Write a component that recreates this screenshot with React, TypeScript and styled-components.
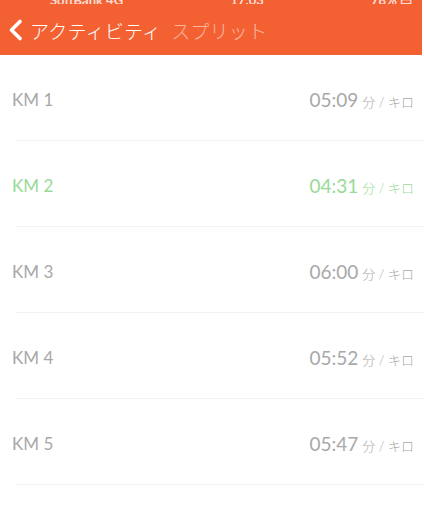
import styled, { createGlobalStyle } from "styled-components";

const GlobalStyle = createGlobalStyle`
  html, body {
    margin: 0;
    padding: 0;
    background: #ffffff;
  }
  body {
    font-family: Lato, "Noto Sans CJK JP", sans-serif;
  }
`;

type Split = { km: number; pace: string; best?: boolean };

const splits: Split[] = [
  { km: 1, pace: "05:09" },
  { km: 2, pace: "04:31", best: true },
  { km: 3, pace: "06:00" },
  { km: 4, pace: "05:52" },
  { km: 5, pace: "05:47" },
];

const App = () => {
  return (
    <Page>
      <GlobalStyle />
      <Header>
        <StatusBar>
          <StatusText>SoftBank 4G</StatusText>
          <StatusText>17:03</StatusText>
          <StatusText>78% ▭</StatusText>
        </StatusBar>
        <NavBar>
          <BackIcon width="15" height="22" viewBox="0 0 15 22">
            <path
              d="M12 2.5 L3.5 11 L12 19.5"
              fill="none"
              stroke="#ffffff"
              strokeWidth="3.6"
              strokeLinecap="round"
              strokeLinejoin="round"
            />
          </BackIcon>
          <BackLabel>アクティビティ</BackLabel>
          <Title>スプリット</Title>
        </NavBar>
      </Header>
      <List>
        {splits.map((s) => (
          <Row key={s.km}>
            <KmLabel $best={s.best}>KM {s.km}</KmLabel>
            <Pace $best={s.best}>
              <PaceValue>{s.pace}</PaceValue>
              <PaceUnit>分 / キロ</PaceUnit>
            </Pace>
          </Row>
        ))}
      </List>
    </Page>
  );
};

const Page = styled.div`
  width: 424px;
  min-height: 512px;
  background: #ffffff;
  overflow: hidden;
`;

const Header = styled.div`
  background-color: #f36133;
  height: 55px;
  margin-right: 2px;
  overflow: hidden;
  display: flex;
  flex-direction: column;
`;

const StatusBar = styled.div`
  height: 4px;
  display: flex;
  justify-content: space-between;
  align-items: flex-end;
  padding: 0 10px 0 50px;
  overflow: hidden;
`;

const StatusText = styled.span`
  font-size: 13px;
  line-height: 13px;
  color: rgba(255, 255, 255, 0.8);
  margin-bottom: -3px;
  font-weight: 700;
`;

const NavBar = styled.div`
  flex: 1;
  display: flex;
  align-items: center;
  padding-left: 8px;
  padding-top: 1px;
`;

const BackIcon = styled.svg`
  margin-right: 7px;
  flex-shrink: 0;
`;

const BackLabel = styled.span`
  font-size: 19px;
  font-weight: 300;
  color: #ffffff;
  letter-spacing: 0.2px;
  margin-right: 10px;
`;

const Title = styled.span`
  font-size: 19px;
  font-weight: 300;
  color: rgba(255, 255, 255, 0.55);
  letter-spacing: 0.2px;
`;

const List = styled.div`
  display: flex;
  flex-direction: column;
`;

const Row = styled.div`
  height: 86px;
  box-sizing: border-box;
  margin-left: 16px;
  padding-right: 10px;
  padding-top: 3px;
  border-bottom: 1px solid #f2f2f2;
  display: flex;
  align-items: center;
  justify-content: space-between;
`;

const KmLabel = styled.span<{ $best?: boolean }>`
  font-size: 17px;
  color: ${(p) => (p.$best ? "#98da96" : "#a8a8a8")};
  margin-left: -4px;
`;

const Pace = styled.span<{ $best?: boolean }>`
  display: flex;
  align-items: baseline;
  gap: 4px;
  color: ${(p) => (p.$best ? "#98da96" : "#a8a8a8")};
`;

const PaceValue = styled.span`
  font-size: 19px;
`;

const PaceUnit = styled.span`
  font-size: 13px;
  font-weight: 300;
`;

export default App;
